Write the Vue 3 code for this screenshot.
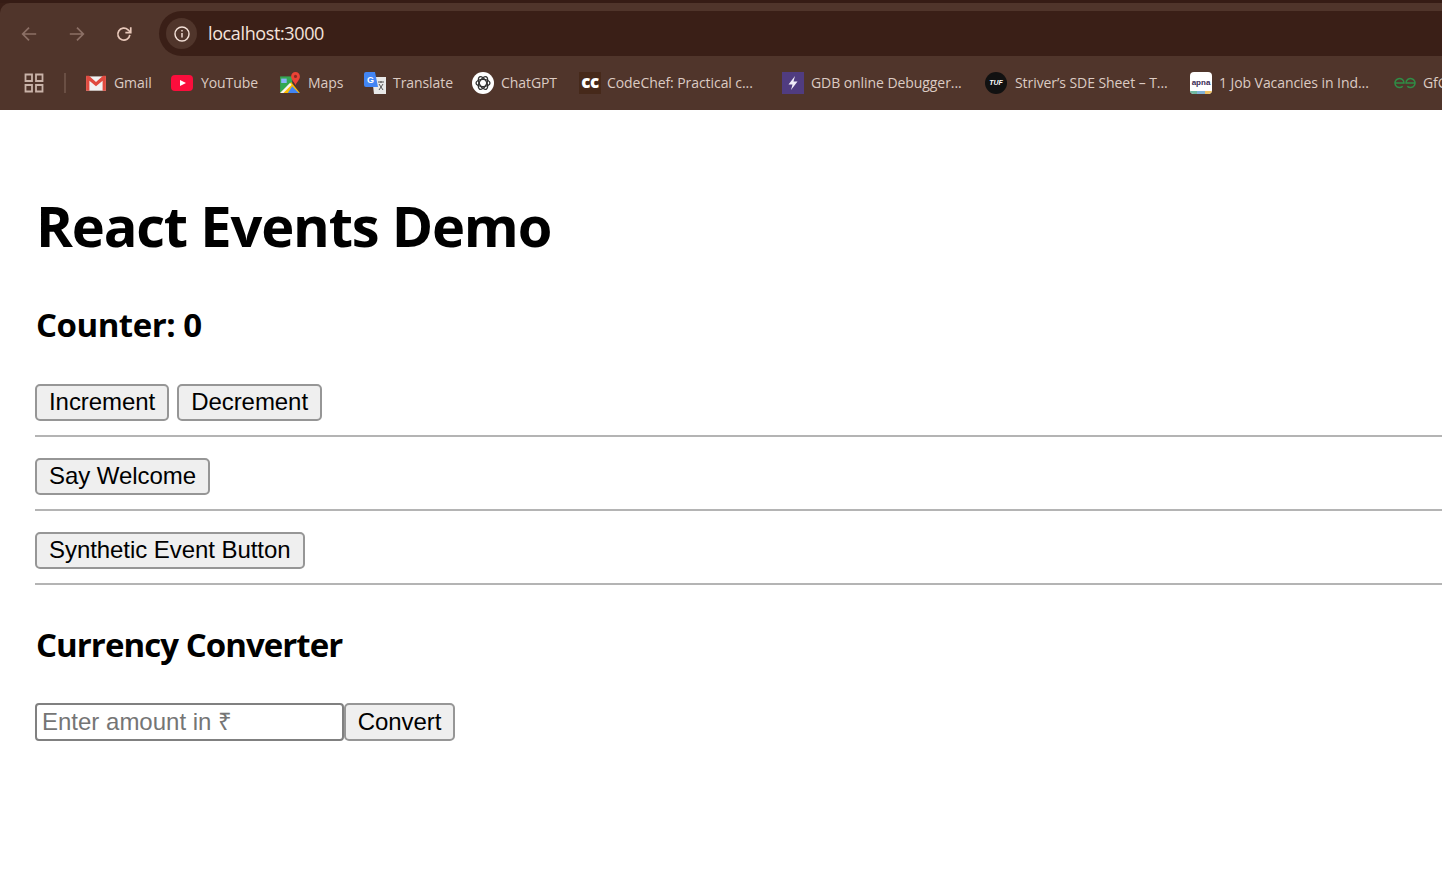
<script setup>
const bookmarks = [
  { name: 'Gmail', icon: 'gmail', width: 86, gap: 7 },
  { name: 'YouTube', icon: 'youtube', width: 108, gap: 8 },
  { name: 'Maps', icon: 'maps', width: 85, gap: 7 },
  { name: 'Translate', icon: 'translate', width: 108, gap: 7 },
  { name: 'ChatGPT', icon: 'chatgpt', width: 107, gap: 7 },
  { name: 'CodeChef: Practical c...', icon: 'cc', width: 203, gap: 6 },
  { name: 'GDB online Debugger...', icon: 'gdb', width: 203, gap: 7 },
  { name: 'Striver’s SDE Sheet – T...', icon: 'tuf', width: 205, gap: 8 },
  { name: '1 Job Vacancies in Ind...', icon: 'apna', width: 204, gap: 7 },
  { name: 'GfG', icon: 'gfg', width: 60, gap: 7 }
]
</script>

<template>
  <div class="shell">
    <header class="chrome">
      <div class="tabstrip"></div>
      <div class="toolbar">
        <svg class="nav-icon dim" viewBox="0 0 20 20"><path d="M18 10H3M10 3 3 10l7 7" /></svg>
        <svg class="nav-icon dim" viewBox="0 0 20 20"><path d="M2 10h15M10 3l7 7-7 7" /></svg>
        <svg class="nav-icon reload" viewBox="0 0 20 20"><path d="M16.500 11a6.700 6.700 0 1 1-2-5.700L17 7.800" /><path d="M17.500 2.500v6h-6" /></svg>
        <div class="omnibox">
          <span class="site-chip">
            <svg viewBox="0 0 20 20" width="18" height="18"><circle cx="10" cy="10" r="7.800" /><path d="M10 9v5M10 5.600v1.600" /></svg>
          </span>
          <span class="url">localhost:3000</span>
        </div>
      </div>
      <nav class="bookmarks">
        <svg class="apps" viewBox="0 0 20 20" width="20" height="20"><path d="M1.500 1.500h6.500V8H1.500zM12 1.500h6.500V8H12zM1.500 12h6.500v6.500H1.500zM12 12h6.500v6.500H12z" /></svg>
        <span class="divider"></span>
        <div v-for="item in bookmarks" :key="item.name" class="bookmark" :style="{ width: item.width + 'px', gap: item.gap + 'px' }">
          <span class="icon-box">
            <svg v-if="item.icon === 'gmail'" class="fav" viewBox="0 0 20 20"><path fill="#f2f2f2" d="M1 4h18v13H1z" /><path fill="#e04a3f" d="M1 3.500h2.600L10 9l6.400-5.500H19V17h-3V8l-6 5-6-5v9H1z" /></svg>
            <svg v-else-if="item.icon === 'youtube'" class="fav" viewBox="0 0 22 16"><rect width="22" height="16" rx="4" fill="#fb0e3c" /><path fill="#fff" d="m9 5 6 3-6 3z" /></svg>
            <svg v-else-if="item.icon === 'maps'" class="fav" viewBox="0 0 20 20"><path fill="#34a853" d="M1 4h11v15H1z" /><path fill="#fbbc04" d="M1 19 11 9l8 10z" /><path fill="#4285f4" d="m8 19 4-6 6 6z" /><path fill="#f5f5f5" d="m1 19 9-9 1.500 1.500L4 19z" /><path fill="#8ab4f8" d="M2 6h5v4H2z" /><path fill="#ea4335" d="M15 0a4 4 0 0 1 4 4c0 3-3 5-4 8-1-3-4-5-4-8a4 4 0 0 1 4-4z" /><circle cx="15" cy="4" r="1.400" fill="#8c2a22" /></svg>
            <svg v-else-if="item.icon === 'translate'" class="fav" viewBox="0 0 22 22"><path fill="#e8e8e8" d="M8 5h14v17H10z" /><path fill="#4285f4" d="M2 0h9l3 15H2a2 2 0 0 1-2-2V2a2 2 0 0 1 2-2z" /><text x="3" y="11" class="g-text">G</text><path stroke="#555" stroke-width="1" fill="none" d="M14 10h6M17 9v2M15 18l4-6M15 12l4 6" /></svg>
            <svg v-else-if="item.icon === 'chatgpt'" class="fav" viewBox="0 0 22 22"><circle cx="11" cy="11" r="11" fill="#fff" /><g fill="none" stroke="#333" stroke-width="1.300"><ellipse cx="11" cy="11" rx="7" ry="3.600" /><ellipse cx="11" cy="11" rx="7" ry="3.600" transform="rotate(60 11 11)" /><ellipse cx="11" cy="11" rx="7" ry="3.600" transform="rotate(120 11 11)" /></g></svg>
            <span v-else-if="item.icon === 'cc'" class="cc">cc</span>
            <svg v-else-if="item.icon === 'gdb'" class="fav" viewBox="0 0 22 22"><path fill="#503c80" d="M0 0h22v22H0z" /><path fill="#f0edf8" d="M13 4 6.500 12.500h4L9 18l6.500-8.500h-4z" /></svg>
            <span v-else-if="item.icon === 'tuf'" class="tuf">TUF</span>
            <span v-else-if="item.icon === 'apna'" class="apna">apna<i class="apna-strip"></i></span>
            <svg v-else class="fav" viewBox="0 0 22 12"><path fill="none" stroke="#2f8d46" stroke-width="1.500" d="M1 6h9a4.500 4.500 0 1 0-1.300 3.200M21 6h-9a4.500 4.500 0 1 1 1.300 3.200" /></svg>
          </span>
          <span class="bookmark-label">{{ item.name }}</span>
        </div>
      </nav>
    </header>

    <main class="page">
      <h1>React Events Demo</h1>
      <h2 class="counter">Counter: 0</h2>
      <div class="row">
        <button>Increment</button>
        <button>Decrement</button>
      </div>
      <hr />
      <div class="row">
        <button>Say Welcome</button>
      </div>
      <hr />
      <div class="row">
        <button>Synthetic Event Button</button>
      </div>
      <hr />
      <h2 class="converter">Currency Converter</h2>
      <div class="convert-row">
        <input type="text" placeholder="Enter amount in ₹" />
        <button class="convert">Convert</button>
      </div>
    </main>
  </div>
</template>

<style>
html, body {
  margin: 0;
  background: #fff;
  overflow: hidden;
}
</style>

<style scoped>
.shell {
  width: 1442px;
  height: 891px;
  overflow: hidden;
}

.chrome {
  background: #3a1f17;
}

.tabstrip {
  height: 3px;
  background: #361c15;
}

.toolbar {
  height: 53px;
  box-sizing: border-box;
  display: flex;
  align-items: center;
  padding: 8px 0 0 19px;
  background: #50352b;
  border-top-left-radius: 10px;
}

.nav-icon {
  width: 18px;
  height: 18px;
  margin: 0 29px 0 1px;
  flex: none;
  fill: none;
  stroke-width: 1.900;
  stroke: #e8c8ba;
}

.nav-icon.dim {
  stroke: #8c7066;
}

.nav-icon.dim + .nav-icon.dim {
  margin-right: 28px;
}

.nav-icon.reload {
  margin-right: 26px;
}

.omnibox {
  flex: 1;
  height: 45px;
  display: flex;
  align-items: center;
  padding-left: 7px;
  background: #3a1f17;
  border-radius: 23px 0 0 23px;
}

.site-chip {
  width: 31px;
  height: 31px;
  border-radius: 50%;
  background: #50352b;
  display: flex;
  align-items: center;
  justify-content: center;
}

.site-chip svg {
  fill: none;
  stroke: #f3e0d7;
  stroke-width: 1.600;
}

.url {
  margin: 0 0 2px 11px;
  color: #f5e4dc;
  font: 18px "Open Sans", "Noto Sans", sans-serif;
  letter-spacing: -0.38px;
}

.bookmarks {
  height: 54px;
  box-sizing: border-box;
  padding: 0 0 1px 24px;
  display: flex;
  align-items: center;
  background: #50352b;
  white-space: nowrap;
  overflow: hidden;
}

.apps {
  flex: none;
  fill: none;
  stroke: #c9b3a9;
  stroke-width: 1.800;
}

.divider {
  width: 2px;
  height: 20px;
  margin: 0 19px 0 20px;
  background: #6a4f44;
  flex: none;
}

.bookmark {
  flex: none;
  display: flex;
  align-items: center;
}

.icon-box {
  width: 22px;
  height: 22px;
  flex: none;
  display: flex;
  align-items: center;
  justify-content: center;
}

.fav {
  width: 22px;
  height: 22px;
}

.g-text {
  fill: #fff;
  font: bold 9px "Liberation Sans", sans-serif;
}

.cc {
  width: 22px;
  height: 22px;
  background: #46291a;
  color: #fff;
  font: 900 17px/19px "Open Sans", sans-serif;
  text-align: center;
  letter-spacing: -0.5px;
}

.tuf {
  width: 22px;
  height: 22px;
  border-radius: 50%;
  background: #111;
  color: #fff;
  font: italic bold 7px/22px "Liberation Sans", sans-serif;
  text-align: center;
}

.apna {
  position: relative;
  width: 22px;
  height: 22px;
  border-radius: 4px;
  overflow: hidden;
  background: #fff;
  color: #3a2a55;
  font: bold 8px/21px "Liberation Sans", sans-serif;
  text-align: center;
}

.apna-strip {
  position: absolute;
  left: 0;
  right: 0;
  bottom: 0;
  height: 3px;
  background: linear-gradient(90deg, #6fb8a0 33%, #7fb2d8 33%, #7fb2d8 66%, #eec264 66%);
}

.bookmark-label {
  color: #dccbc3;
  font: 14px "Open Sans", "Noto Sans", sans-serif;
  letter-spacing: -0.07px;
}

.page {
  padding-left: 35px;
  background: #fff;
  color: #000;
}

h1 {
  margin: 0;
  padding: 83px 0 0 1px;
  font: 700 56px/64px "Open Sans", "Noto Sans", sans-serif;
  letter-spacing: -1.2px;
}

h2 {
  margin: 0;
  padding-left: 1px;
  font: 700 33px/44px "Open Sans", "Noto Sans", sans-serif;
}

.counter {
  margin-top: 46px;
  letter-spacing: -0.5px;
}

.converter {
  margin-top: 38px;
  letter-spacing: -0.95px;
}

.row {
  display: flex;
  gap: 8px;
}

.counter + .row {
  margin-top: 37px;
}

button {
  height: 37px;
  padding: 0 12px 2px;
  box-sizing: border-box;
  border: 2px solid #969696;
  border-radius: 5px;
  background: #efefef;
  color: #000;
  font: 24px "Liberation Sans", Arial, sans-serif;
  letter-spacing: -0.06px;
}

hr {
  height: 2px;
  margin: 14px 0 21px;
  border: 0;
  background: #b4b4b4;
}

.convert-row {
  display: flex;
  margin-top: 36px;
}

input {
  width: 309px;
  height: 38px;
  box-sizing: border-box;
  padding: 0 5px;
  border: 2px solid #808080;
  border-radius: 4px;
  background: #fff;
  font: 24px "Liberation Sans", Arial, sans-serif;
}

input::placeholder {
  color: #757575;
  opacity: 1;
}

button.convert {
  height: 38px;
  width: 111px;
  padding: 0;
}
</style>
